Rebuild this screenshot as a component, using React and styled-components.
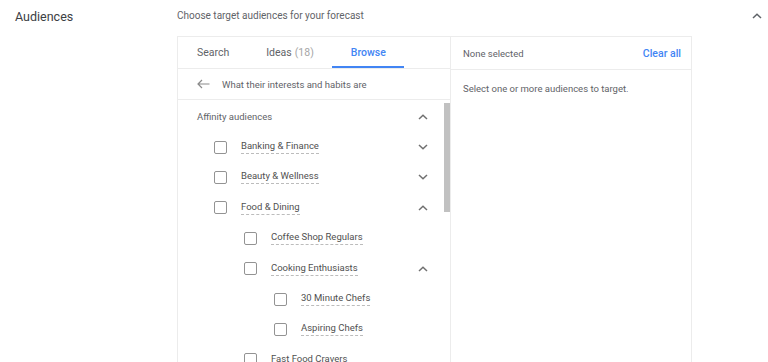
import React from "react";
import styled, { createGlobalStyle } from "styled-components";

const Global = createGlobalStyle`
  html, body { margin: 0; padding: 0; background: #fff; overflow: hidden; }
  body { font-family: Roboto, "Liberation Sans", Arial, sans-serif; }
`;

const Page = styled.div`
  display: grid;
  grid-template-columns: 177px 1fr 60px;
  height: 362px;
  overflow: hidden;
`;

const Label = styled.div`
  padding: 9px 0 0 15px;
  font-size: 12.5px;
  color: #3c4043;
`;

const Main = styled.div`
  display: flex;
  flex-direction: column;
`;

const Subtitle = styled.div`
  height: 36px;
  padding-top: 10px;
  box-sizing: border-box;
  font-size: 10px;
  color: #5f6368;
`;

const Card = styled.div`
  width: 515px;
  height: 340px;
  box-sizing: border-box;
  border: 1px solid #ececec;
  display: grid;
  grid-template-columns: 273px 1fr;
`;

const LeftPane = styled.div`
  position: relative;
  display: flex;
  flex-direction: column;
  border-right: 1px solid #ececec;
  overflow: hidden;
`;

const RightPane = styled.div`
  display: flex;
  flex-direction: column;
`;

const Tabs = styled.div`
  display: flex;
  height: 32px;
  border-bottom: 1px solid #ececec;
`;

const Tab = styled.div`
  position: relative;
  padding: 0 18px 0 19px;
  display: flex;
  align-items: center;
  font-size: 10.5px;
  font-weight: ${(p) => (p.$active ? 500 : 400)};
  color: ${(p) => (p.$active ? "#4285f4" : "#5f6368")};
  &::after {
    content: "";
    display: ${(p) => (p.$active ? "block" : "none")};
    position: absolute;
    left: 0;
    right: 0;
    bottom: 0;
    height: 2px;
    background: #4285f4;
  }
`;

const Count = styled.span`
  color: #a6a6a6;
  margin-left: 3px;
`;

const BackRow = styled.div`
  display: flex;
  align-items: center;
  gap: 12px;
  height: 32px;
  padding-left: 19px;
  border-bottom: 1px solid #ececec;
  font-size: 9.5px;
  color: #5f6368;
`;

const List = styled.div`
  display: flex;
  flex-direction: column;
  padding-top: 1px;
`;

const Row = styled.div`
  display: flex;
  align-items: center;
  flex: none;
  height: 30.4px;
  padding-left: ${(p) => 36 + p.$level * 30}px;
  padding-right: 22px;
  font-size: 9.5px;
  color: #5f6368;
`;

const HeadRow = styled(Row)`
  padding-left: 19px;
`;

const Box = styled.span`
  width: 11px;
  height: 11px;
  border: 1.5px solid #939393;
  border-radius: 2px;
  flex: none;
  margin-right: 14px;
`;

const ItemText = styled.span`
  color: #505050;
  border-bottom: 1px dashed #bcbcbc;
  line-height: 12px;
  padding-bottom: 1px;
`;

const Grow = styled.span`
  flex: 1;
`;

const Thumb = styled.div`
  position: absolute;
  right: 0;
  top: 66px;
  width: 6px;
  height: 109px;
  background: #c1c1c1;
`;

const RightHeader = styled.div`
  display: flex;
  align-items: center;
  justify-content: space-between;
  height: 32px;
  padding: 0 10px 0 12px;
  border-bottom: 1px solid #ececec;
  font-size: 9.5px;
  color: #5f6368;
`;

const ClearAll = styled.span`
  color: #4285f4;
  font-weight: 500;
  font-size: 10.5px;
`;

const Empty = styled.div`
  padding: 13px 12px;
  font-size: 9.5px;
  color: #5f6368;
`;

const Side = styled.div`
  display: flex;
  justify-content: flex-end;
  align-items: flex-start;
  padding: 13px 6px 0 0;
`;

const Chevron = ({ up, color = "#707070" }) => (
  <svg width="10" height="6" viewBox="0 0 10 6" fill="none">
    <polyline
      points={up ? "1,5 5,1.2 9,5" : "1,1 5,4.8 9,1"}
      stroke={color}
      strokeWidth="1.5"
    />
  </svg>
);

const Arrow = () => (
  <svg width="13" height="10" viewBox="0 0 13 10" fill="none">
    <path d="M12.5 5 H1.2 M5 1 L1 5 L5 9" stroke="#8a8a8a" strokeWidth="1.2" />
  </svg>
);

const items = [
  { label: "Banking & Finance", level: 0, chev: "down" },
  { label: "Beauty & Wellness", level: 0, chev: "down" },
  { label: "Food & Dining", level: 0, chev: "up" },
  { label: "Coffee Shop Regulars", level: 1 },
  { label: "Cooking Enthusiasts", level: 1, chev: "up" },
  { label: "30 Minute Chefs", level: 2 },
  { label: "Aspiring Chefs", level: 2 },
  { label: "Fast Food Cravers", level: 1 },
];

export default function App() {
  return (
    <>
      <Global />
      <Page>
        <Label>Audiences</Label>
        <Main>
          <Subtitle>Choose target audiences for your forecast</Subtitle>
          <Card>
            <LeftPane>
              <Tabs>
                <Tab>Search</Tab>
                <Tab>
                  Ideas<Count>(18)</Count>
                </Tab>
                <Tab $active>Browse</Tab>
              </Tabs>
              <BackRow>
                <Arrow />
                What their interests and habits are
              </BackRow>
              <List>
                <HeadRow $level={0}>
                  Affinity audiences
                  <Grow />
                  <Chevron up />
                </HeadRow>
                {items.map((it) => (
                  <Row key={it.label} $level={it.level}>
                    <Box />
                    <ItemText>{it.label}</ItemText>
                    <Grow />
                    {it.chev && <Chevron up={it.chev === "up"} />}
                  </Row>
                ))}
              </List>
              <Thumb />
            </LeftPane>
            <RightPane>
              <RightHeader>
                None selected
                <ClearAll>Clear all</ClearAll>
              </RightHeader>
              <Empty>Select one or more audiences to target.</Empty>
            </RightPane>
          </Card>
        </Main>
        <Side>
          <Chevron up color="#5f6368" />
        </Side>
      </Page>
    </>
  );
}
